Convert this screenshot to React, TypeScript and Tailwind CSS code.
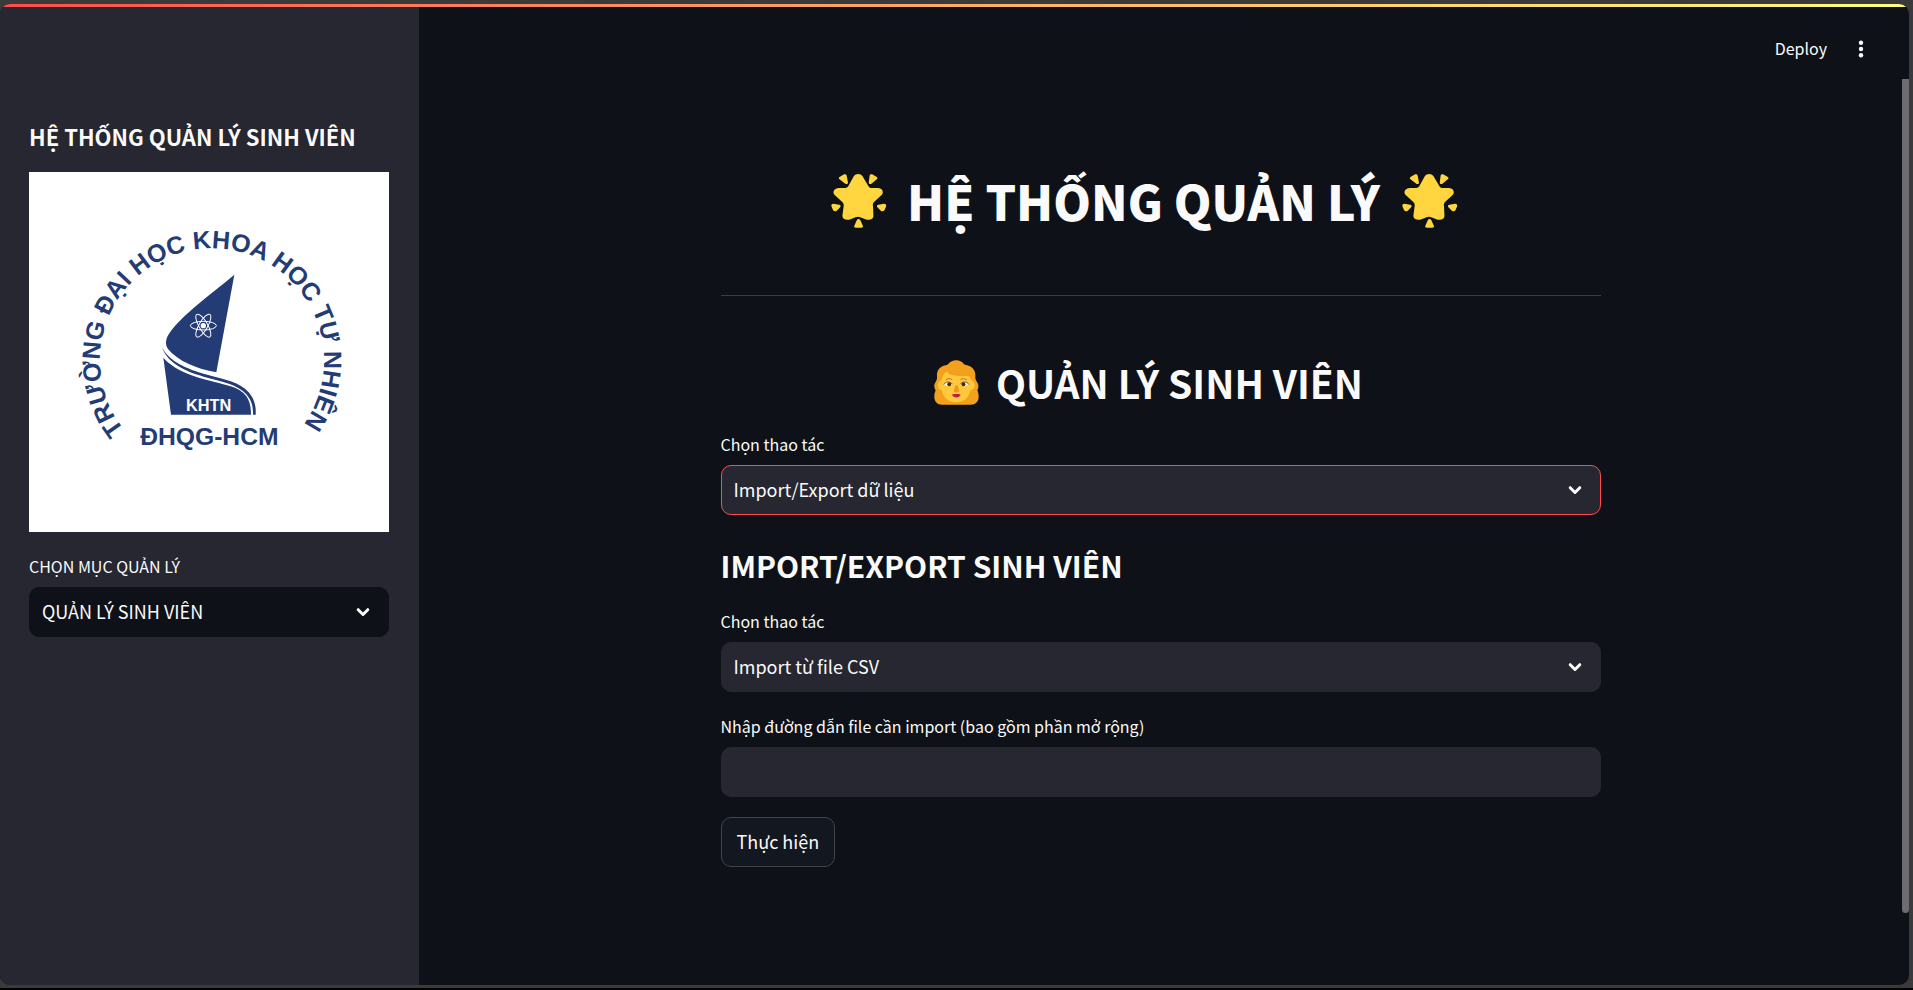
import { useState } from "react";

function Chevron() {
  return (
    <svg
      viewBox="0 0 24 24"
      className="pointer-events-none absolute top-1/2 right-3.5 size-6 -translate-y-1/2"
      fill="none"
      stroke="#fafafa"
      strokeWidth="3"
      strokeLinecap="round"
      strokeLinejoin="round"
      aria-hidden="true"
    >
      <path d="M7.2 9.7 12 14.5l4.8-4.8" />
    </svg>
  );
}

type SelectFieldProps = {
  id: string;
  label: string;
  options: string[];
  className: string;
};

function SelectField({ id, label, options, className }: SelectFieldProps) {
  const [value, setValue] = useState(options[0]);
  return (
    <div className="flex flex-col">
      <label htmlFor={id} className="mb-1.5 text-base leading-[30px]">
        {label}
      </label>
      <div className="relative">
        <select
          id={id}
          value={value}
          onChange={(e) => setValue(e.target.value)}
          className={`block h-[50px] w-full appearance-none rounded-[10px] border pr-12 pb-0.5 pl-3 text-lg outline-none ${className}`}
        >
          {options.map((option) => (
            <option key={option}>{option}</option>
          ))}
        </select>
        <Chevron />
      </div>
    </div>
  );
}

function Star() {
  return (
    <svg viewBox="0 0 167 164" className="h-[55px] w-14 shrink-0" fill="#ffd63f" aria-hidden="true">
      <g transform="scale(1.265 1)">
        <path d="M54 6c4-8 16-8 20 0l14 30c2 4 4 6 9 6l14 0c11 1 15 14 7 22l-16 19c-3 4-4 7-3 12l1 28c1 11-9 17-19 12l-12-6c-4-2-7-2-11 0l-12 6c-10 5-21-1-19-12l3-28c0-5 0-8-4-12L10 64c-8-8-4-21 8-22l13 0c5 0 8-2 10-6z" />
        <path d="M20 9 29 2c4-2 7-1 8 3l3 20c0 5-4 6-7 3L20 16c-2-3-2-5 0-7zM108 9 99 2c-4-2-7-1-8 3l-2 20c0 5 4 6 7 3l12-12c2-3 2-5 0-7zM1 96l4 12c2 4 5 4 8 2l8-10c3-4 2-7-2-8L6 89c-4 0-6 3-5 7zM130 96l-4 12c-2 4-5 4-8 2l-8-10c-3-4-2-7 2-8l13-3c4 0 6 3 5 7zM59 160h12c4 0 5-3 4-6l-6-17c-2-4-6-4-8 0l-6 17c-1 3 0 6 4 6z" />
      </g>
    </svg>
  );
}

function Woman() {
  return (
    <svg viewBox="0 0 136 136" className="size-[45px] shrink-0" aria-hidden="true">
      <path
        d="M67 1c10 0 18 4 23 11 5 4 11 3 17 6 12 5 19 17 18 31-1 8 2 13 6 19 5 8 4 17 0 24 3 6 4 13 4 19 0 15-10 24-24 24H25C10 135 1 126 1 111c0-7 1-13 4-19-5-8-6-16-1-24 4-6 6-11 5-19-1-15 6-26 18-31 6-3 12-2 17-7C49 5 57 1 67 1z"
        fill="#f3a11c"
      />
      <path
        d="M39 34c4 10 18 14 36 14h27c6 0 8 5 8 12 8 2 13 8 13 16s-5 14-13 15c-3 23-20 37-43 37S27 114 24 91c-8-1-12-7-12-15s5-14 12-16c0-12 8-20 15-26z"
        fill="#ffc83d"
      />
      <path d="M36 60c5-5 13-5 18-1M81 59c5-4 13-4 18 1" fill="none" stroke="#c66b2b" strokeWidth="3" strokeLinecap="round" />
      <path d="M31 74c4-9 19-10 24 0-6 6-17 6-24 0zM80 74c5-10 20-9 24 0-7 6-18 6-24 0z" fill="#fff" />
      <circle cx="46" cy="73" r="6" fill="#422b24" />
      <circle cx="89" cy="73" r="6" fill="#422b24" />
      <path d="M30 73c5-9 20-9 25-1M80 72c5-8 20-8 25 1" fill="none" stroke="#422b24" strokeWidth="2" strokeLinecap="round" />
      <path d="M65 76h6l5 16c1 4-3 6-8 6s-9-2-8-6z" fill="#f3951c" />
      <path d="M54 105c4-3 9-3 13-2 5-1 10-1 14 2-3 6-8 8-13 8s-11-2-14-8z" fill="#ba1f48" />
    </svg>
  );
}

function UniversityLogo() {
  return (
    <svg
      viewBox="27 21 1080 1080"
      className="aspect-square w-full bg-white"
      role="img"
      aria-label="Logo KHTN"
      fill="#243c76"
    >
      <defs>
        <path id="logo-arc" d="M313 795A336 336 0 1 1 813 824" />
        <ellipse id="orbit" cx="0" cy="0" rx="39" ry="13" fill="none" stroke="#fff" strokeWidth="3" />
      </defs>
      <g className="font-['Liberation_Sans',sans-serif] font-bold">
        <text fontSize="75">
          <textPath href="#logo-arc">TRƯỜNG ĐẠI HỌC KHOA HỌC TỰ NHIÊN</textPath>
        </text>
        <text x="568" y="839" fontSize="74" textAnchor="middle">
          ĐHQG-HCM
        </text>
      </g>
      <path d="M643 329 589 622C530 612 472 587 444 552c-9-12-8-30 4-47 38-55 108-104 195-176z" />
      <path d="M426 547c20 42 77 66 130 81 62 17 103 23 130 54 16 19 23 40 21 67h-8c1-27-6-45-20-61-25-29-66-36-128-53-54-15-108-40-125-88z" />
      <path d="M430 578c26 31 74 51 122 65 65 18 106 21 127 51 11 16 14 34 14 55H453z" />
      <text
        x="566"
        y="738"
        fontSize="49"
        textAnchor="middle"
        fill="#fff"
        className="font-['Liberation_Sans',sans-serif] font-bold"
      >
        KHTN
      </text>
      <g transform="translate(550 482)">
        <use href="#orbit" />
        <use href="#orbit" transform="rotate(60)" />
        <use href="#orbit" transform="rotate(120)" />
        <circle r="8" fill="#fff" />
      </g>
    </svg>
  );
}

function Sidebar() {
  return (
    <aside className="flex w-[419px] shrink-0 flex-col bg-[#262730] pt-[109px] pr-[30px] pl-[29px]">
      <h2 className="mb-4 h-10 text-[22px] leading-10 font-bold whitespace-nowrap">HỆ THỐNG QUẢN LÝ SINH VIÊN</h2>
      <UniversityLogo />
      <div className="mt-[19px]">
        <SelectField
          id="section"
          label="CHỌN MỤC QUẢN LÝ"
          options={["QUẢN LÝ SINH VIÊN"]}
          className="border-[#0e1117] bg-[#0e1117]"
        />
      </div>
    </aside>
  );
}

function Toolbar() {
  return (
    <header className="flex h-[72px] items-center justify-end gap-[18px] pt-3 pr-8">
      <button type="button" className="pb-0.5 text-base">
        Deploy
      </button>
      <button type="button" aria-label="Menu" className="flex size-8 items-center justify-center">
        <svg viewBox="0 0 24 24" className="size-6" fill="#fafafa" aria-hidden="true">
          <circle cx="12" cy="5.7" r="2.2" />
          <circle cx="12" cy="12" r="2.2" />
          <circle cx="12" cy="18.3" r="2.2" />
        </svg>
      </button>
    </header>
  );
}

export default function App() {
  const [path, setPath] = useState("");
  return (
    <div className="flex h-screen flex-col border-b-2 border-black bg-[#3a3a3a] pt-1 pr-1 pb-[3px] font-['Noto_Sans_CJK_SC',sans-serif] text-[#fafafa]">
      <div className="flex min-h-0 grow flex-col overflow-hidden rounded-[10px] bg-[#0e1117]">
        <div className="h-[3px] shrink-0 bg-linear-to-r from-[#ff4b4b] to-[#fffd80]" />
        <div className="flex min-h-0 grow">
          <Sidebar />
          <div className="flex min-w-0 grow flex-col">
            <Toolbar />
            <div className="flex min-h-0 grow">
              <main className="flex min-w-0 grow justify-center">
                <div className="flex w-full max-w-[880px] flex-col">
                  <div className="flex items-center justify-center pt-[82px] pr-8">
                    <Star />
                    <h1 className="mr-[22px] ml-5 h-20 text-[48px] leading-[78px] font-black whitespace-nowrap">
                      HỆ THỐNG QUẢN LÝ
                    </h1>
                    <Star />
                  </div>
                  <hr className="mt-[54px] border-[#3b3d44]" />
                  <div className="mt-[54px] flex items-center justify-center pr-6">
                    <Woman />
                    <h2 className="ml-[17px] h-16 text-[39px] leading-16 font-bold whitespace-nowrap">
                      QUẢN LÝ SINH VIÊN
                    </h2>
                  </div>
                  <div className="mt-[15px]">
                    <SelectField
                      id="action"
                      label="Chọn thao tác"
                      options={["Import/Export dữ liệu"]}
                      className="border-[#ff4b4b] bg-[#262730]"
                    />
                  </div>
                  <h3 className="mt-[22px] h-14 text-[30px] leading-14 font-bold">IMPORT/EXPORT SINH VIÊN</h3>
                  <div className="mt-[13px]">
                    <SelectField
                      id="mode"
                      label="Chọn thao tác"
                      options={["Import từ file CSV"]}
                      className="border-[#262730] bg-[#262730]"
                    />
                  </div>
                  <div className="mt-[19px] flex flex-col">
                    <label htmlFor="path" className="mb-1.5 text-base leading-[30px]">
                      Nhập đường dẫn file cần import (bao gồm phần mở rộng)
                    </label>
                    <input
                      id="path"
                      type="text"
                      value={path}
                      onChange={(e) => setPath(e.target.value)}
                      className="h-[50px] rounded-[10px] bg-[#262730] px-3 text-lg outline-none"
                    />
                  </div>
                  <button
                    type="button"
                    className="mt-5 h-[50px] self-start rounded-[10px] border border-[#41444c] bg-[#131720] px-[15px] pb-0.5 text-lg"
                  >
                    Thực hiện
                  </button>
                </div>
              </main>
              <div className="w-[7px] shrink-0" aria-hidden="true">
                <div className="h-[92%] rounded-b-[4px] bg-[#6c6d71]" />
              </div>
            </div>
          </div>
        </div>
      </div>
    </div>
  );
}
